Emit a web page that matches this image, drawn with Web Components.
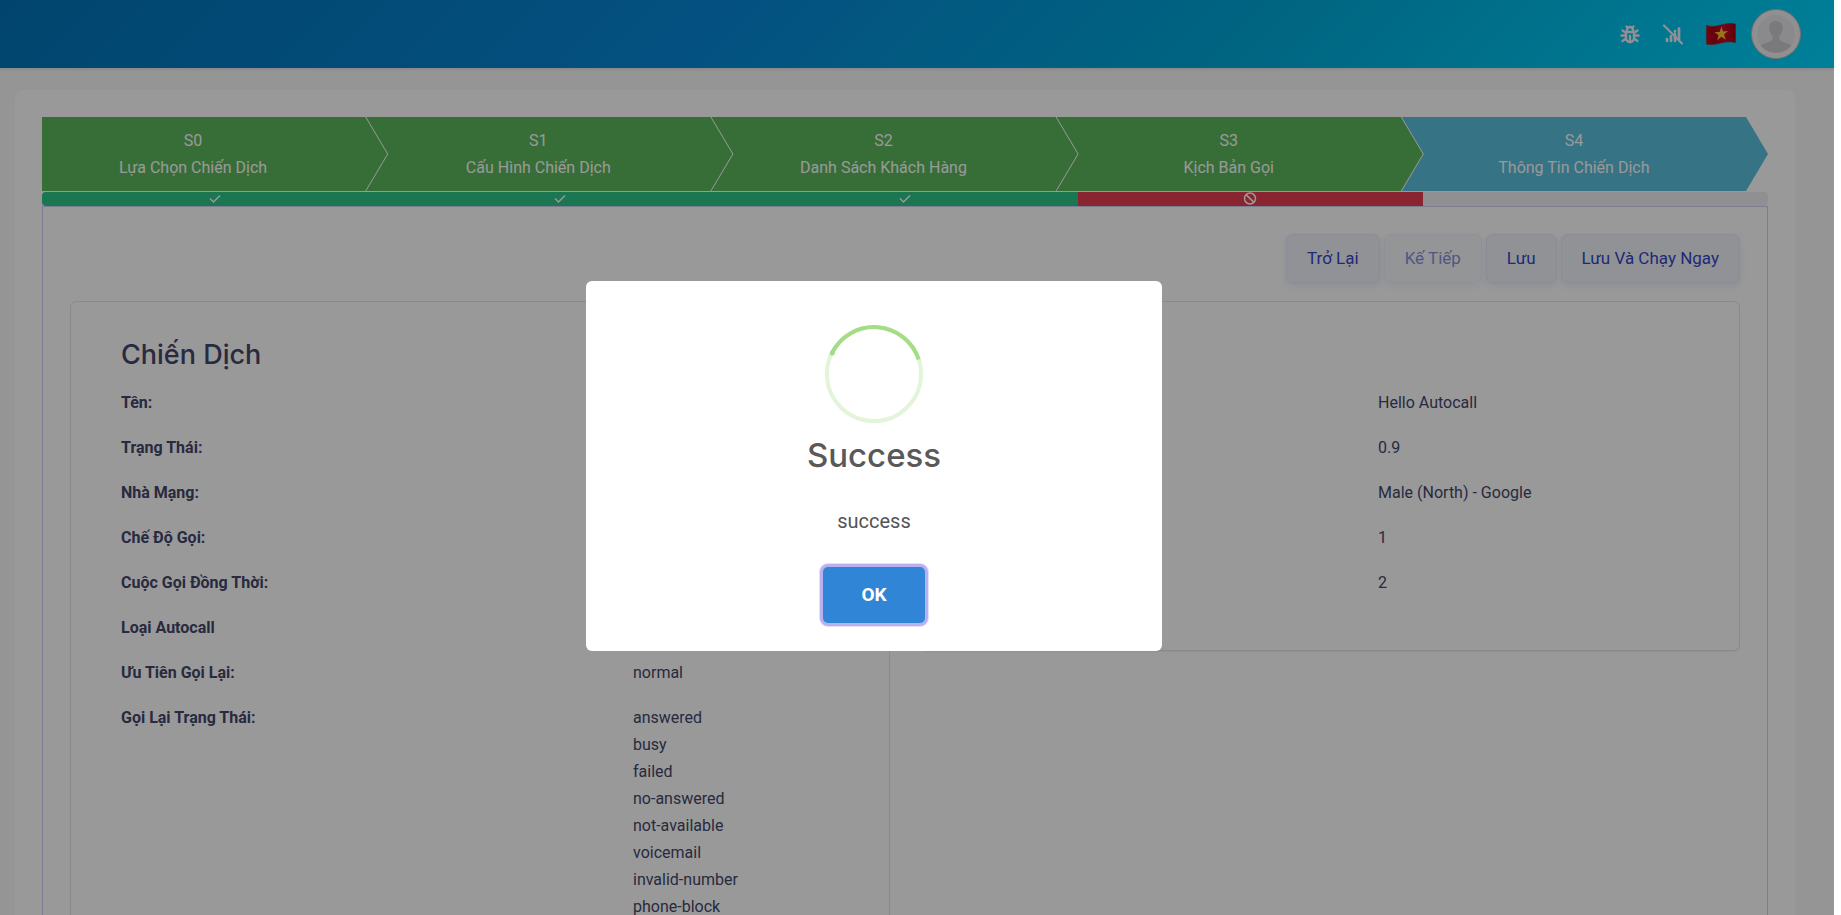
<!DOCTYPE html>
<html lang="vi">
<head>
<meta charset="utf-8">
<meta name="viewport" content="width=device-width, initial-scale=1">
<title>Thông Tin Chiến Dịch</title>
<style>
  html, body { height: 100%; }
  body {
    margin: 0;
    overflow: hidden;
    background: #fff;
    color: #44476a;
    font: 16px/27px Roboto, "Liberation Sans", sans-serif;
  }
</style>
</head>
<body>
<campaign-app>
  <app-bar></app-bar>
  <wizard-card>
    <step-list slot="steps">
      <step-item first state="done" code="S0">Lựa Chọn Chiến Dịch</step-item>
      <step-item state="done" code="S1">Cấu Hình Chiến Dịch</step-item>
      <step-item state="done" code="S2">Danh Sách Khách Hàng</step-item>
      <step-item state="done" code="S3">Kịch Bản Gọi</step-item>
      <step-item state="current" code="S4">Thông Tin Chiến Dịch</step-item>
    </step-list>
    <step-progress slot="steps" states="ok ok ok blocked none"></step-progress>
    <tool-bar>
      <soft-button>Trở Lại</soft-button>
      <soft-button disabled>Kế Tiếp</soft-button>
      <soft-button>Lưu</soft-button>
      <soft-button>Lưu Và Chạy Ngay</soft-button>
    </tool-bar>
    <card-row>
      <info-card>
        <span slot="title">Chiến Dịch</span>
        <info-row label="Tên:"></info-row>
        <info-row label="Trạng Thái:"></info-row>
        <info-row label="Nhà Mạng:"></info-row>
        <info-row label="Chế Độ Gọi:"></info-row>
        <info-row label="Cuộc Gọi Đồng Thời:"></info-row>
        <info-row label="Loại Autocall"></info-row>
        <info-row label="Ưu Tiên Gọi Lại:">normal</info-row>
        <info-row label="Gọi Lại Trạng Thái:">
          <div>answered</div><div>busy</div><div>failed</div><div>no-answered</div>
          <div>not-available</div><div>voicemail</div><div>invalid-number</div><div>phone-block</div>
        </info-row>
      </info-card>
      <info-card style="--info-columns: 53fr 47fr">
        <info-row>Hello Autocall</info-row>
        <info-row>0.9</info-row>
        <info-row>Male (North) - Google</info-row>
        <info-row>1</info-row>
        <info-row>2</info-row>
      </info-card>
    </card-row>
  </wizard-card>
</campaign-app>
<alert-dialog heading="Success">success</alert-dialog>

<script>
function define(name, html, setup) {
  const template = document.createElement('template');
  template.innerHTML = html;
  customElements.define(name, class extends HTMLElement {
    constructor() {
      super();
      this.attachShadow({ mode: 'open' }).append(template.content.cloneNode(true));
    }
    connectedCallback() { if (setup) setup(this, this.shadowRoot); }
  });
}

define('campaign-app', `
  <style>
    :host { display: block; min-height: 100%; margin-right: 7px; background: #f8f8f8; }
  </style>
  <slot></slot>`);

define('app-bar', `
  <style>
    :host { display: block; position: relative; box-shadow: 0 1px 3px rgba(0,0,0,.12); }
    header {
      display: flex; align-items: center; justify-content: flex-end;
      height: 68px; padding-right: 33px; box-sizing: border-box;
      background: linear-gradient(135deg, #0274b7 0%, #0786d6 38%, #00a9d8 68%, #00d6ff 100%);
    }
    button { display: flex; padding: 0; border: 0; background: none; color: #f0f0f8; }
    svg { display: block; }
    .bug, .signal { margin-right: 19px; }
    .flag { margin: 0 15px 0 2px; }
  </style>
  <header>
    <button class="bug" aria-label="Bug"><svg width="24" height="24" viewBox="0 0 24 24" fill="none" stroke="currentColor" stroke-width="2.400" stroke-linecap="round">
      <path d="M8 10h8v6a4 4 0 0 1-8 0z" stroke-linejoin="round"/><path d="M9 9.500V8a3 3 0 0 1 6 0v1.500M12 14v6M9.500 5.500 8.500 4.500M14.500 5.500l1-1M7 13.500H3.500M17 13.500h3.500M7.500 10.500l-3-2M16.500 10.500l3-2M7.500 17l-3 2M16.500 17l3 2"/></svg></button>
    <button class="signal" aria-label="Signal"><svg width="24" height="24" viewBox="0 0 24 24" fill="none" stroke="currentColor" stroke-width="2.700" stroke-linecap="round">
      <path d="M6 19v-2M10 19v-5M14 19v-7M18 17V6.500M14 9.500v-.500"/><path d="M3 3.500 21 21.500" stroke-width="2.200"/></svg></button>
    <button class="flag" aria-label="Tiếng Việt"><svg width="30" height="24" viewBox="0 0 30 24">
      <defs><linearGradient id="cloth"><stop offset="0" stop-color="#c4081d"/><stop offset=".25" stop-color="#a80318"/><stop offset=".6" stop-color="#cb0a22"/><stop offset="1" stop-color="#9c0215"/></linearGradient></defs>
      <path d="M.5 3.500c5 1.500 9 1 14.500-.500S25 .8 29.500 2v18.500c-5-1.200-9.500-.8-14.500.5S5.500 23.200.5 22z" fill="url(#cloth)" stroke="#8c2a22" stroke-width=".6"/>
      <path d="m15.500 4.500 1.500 5 5-.4-4 3.400 1.800 5-4.400-2.800-4.200 3.500 1.400-5.200-4.300-2.700 5.300-.4z" fill="#ffc52b"/></svg></button>
    <button aria-label="Tài khoản"><svg width="50" height="50" viewBox="0 0 50 50">
      <defs><clipPath id="disc"><circle cx="25" cy="25" r="19"/></clipPath></defs>
      <circle cx="25" cy="25" r="24.500" fill="#f0f0f2" stroke="#c9b5bd" stroke-width="1"/>
      <circle cx="25" cy="25" r="19" fill="#e6e6e9"/>
      <path clip-path="url(#disc)" fill="#cccccf" d="M25 12c-4.500 0-7 3-6.700 7 .2 3.500 1.500 6 3.200 8v3.500c-1 3-10 3.500-13.500 7L12 44h26l4-6.500c-3.500-3.500-12.500-4-13.500-7V27c1.700-2 3-4.500 3.200-8 .3-4-2.200-7-6.700-7z"/></svg></button>
  </header>`);

define('wizard-card', `
  <style>
    :host { display: block; margin: 22px 39px 0 15px; padding: 27px; border-radius: 8px; background: #fff; }
    section { padding: 27px; border: 1px solid #d1d1f0; }
  </style>
  <slot name="steps"></slot>
  <section><slot></slot></section>`);

define('step-list', `
  <style>
    :host { display: grid; grid-template-columns: repeat(5, 1fr); margin-bottom: 1px; }
  </style>
  <slot></slot>`);

define('step-item', `
  <style>
    :host { display: block; position: relative; color: #fff; text-align: center; --fill: #5cb85c; }
    :host([state="current"]) { --fill: #5bc0de; }
    :host::before {
      content: ""; position: absolute; inset: 0 0 0 -22px; background: var(--fill);
      clip-path: polygon(1px 0, calc(100% - 22px) 0, 100% 50%, calc(100% - 22px) 100%, 1px 100%, 23px 50%);
    }
    :host([first])::before {
      left: 0;
      clip-path: polygon(0 0, calc(100% - 22px) 0, 100% 50%, calc(100% - 22px) 100%, 0 100%);
    }
    div { position: relative; padding: 10px 43px 10px 0; }
    span { display: block; }
  </style>
  <div><span class="code"></span><slot></slot></div>`,
  (el, root) => { root.querySelector('.code').textContent = el.getAttribute('code'); });

define('step-progress', `
  <style>
    :host { display: grid; grid-template-columns: repeat(5, 1fr); height: 14px; border-radius: 4px; overflow: hidden; background: #f0f0f3; color: #fff; }
    div { display: flex; align-items: center; justify-content: center; }
    .ok { background: #2dc688; }
    .blocked { background: #e33e50; }
    svg { width: 14px; height: 14px; fill: none; stroke: currentColor; stroke-width: 1.500; }
  </style>`,
  (el, root) => {
    const icons = {
      ok: '<svg viewBox="0 0 14 14"><path d="M2 6.500 5.500 10 12 3.500"/></svg>',
      blocked: '<svg viewBox="0 0 14 14"><circle cx="7" cy="6.500" r="5.500"/><path d="m3.100 2.600 7.800 7.800"/></svg>',
      none: ''
    };
    for (const state of el.getAttribute('states').split(' ')) {
      const cell = document.createElement('div');
      cell.className = state;
      cell.innerHTML = icons[state];
      root.append(cell);
    }
  });

define('tool-bar', `
  <style>
    :host { display: flex; justify-content: flex-end; gap: 4px; margin-bottom: 18px; }
  </style>
  <slot></slot>`);

define('soft-button', `
  <style>
    :host { display: block; }
    button {
      height: 49px; padding: 0 20px; border: 1px solid #e8eafa; border-radius: 7px;
      background: #f2f4fb; color: #3347c4; box-shadow: 0 3px 6px rgba(90,110,220,.12);
      font: 17px/27px Roboto, sans-serif;
    }
    button:disabled { opacity: .6; }
  </style>
  <button type="button"><slot></slot></button>`,
  (el, root) => { root.querySelector('button').disabled = el.hasAttribute('disabled'); });

define('card-row', `
  <style>
    :host { display: grid; grid-template-columns: 1fr 1fr; gap: 30px; align-items: start; }
  </style>
  <slot></slot>`);

define('info-card', `
  <style>
    :host { display: block; padding: 37px 0 36px 50px; border: 1px solid #e6e6e8; border-radius: 6px; box-shadow: 0 1px 1px rgba(0,0,0,.05); }
    h3 { min-height: 32px; margin: 0 0 18px; font: 500 27px/32px Inter, Roboto, sans-serif; }
  </style>
  <h3><slot name="title"></slot></h3>
  <slot></slot>`);

define('info-row', `
  <style>
    :host { display: block; }
    dl { display: grid; grid-template-columns: var(--info-columns, 2fr 1fr); min-height: 27px; margin: 0 0 18px; }
    dt { font-weight: 700; }
    dd { margin: 0; }
  </style>
  <dl><dt></dt><dd><slot></slot></dd></dl>`,
  (el, root) => { root.querySelector('dt').textContent = el.getAttribute('label') || ''; });

define('alert-dialog', `
  <style>
    :host {
      display: grid; place-items: center; position: fixed; inset: 0 7px 0 0;
      padding: 17px 86px 0 0; background: rgba(0,0,0,.4); color: #545454;
    }
    div {
      display: flex; flex-direction: column; align-items: center; box-sizing: border-box;
      width: 576px; max-width: 100%; padding: 44px 0 28px; border-radius: 6px; background: #fff;
    }
    svg { display: block; }
    h2 { margin: 12px 0 30px; color: #595959; font: 500 33px/40px Inter, Roboto, sans-serif; }
    p { margin: 0 0 30px; font-size: 20px; line-height: 32px; }
    button {
      width: 102px; height: 56px; border: 0; border-radius: 5px;
      background: #3085d6; color: #fff; font: 700 19px/28px Roboto, sans-serif;
      box-shadow: 0 0 0 3px #b9b0ef, 0 0 0 4px #e3dffa;
    }
  </style>
  <div role="dialog" aria-modal="true" aria-labelledby="heading">
    <svg width="98" height="98" viewBox="0 0 98 98" fill="none" stroke-width="4">
      <circle cx="49" cy="49" r="47" stroke="#a5dc86" stroke-opacity=".3"/>
      <path d="M7 28A47 47 0 0 1 93.700 34.500" stroke="#a5dc86"/>
      <circle cx="7.300" cy="28" r="2.500" fill="#a5dc86"/>
    </svg>
    <h2 id="heading"></h2>
    <p><slot></slot></p>
    <button type="button">OK</button>
  </div>`,
  (el, root) => { root.querySelector('h2').textContent = el.getAttribute('heading'); });
</script>
</body>
</html>
